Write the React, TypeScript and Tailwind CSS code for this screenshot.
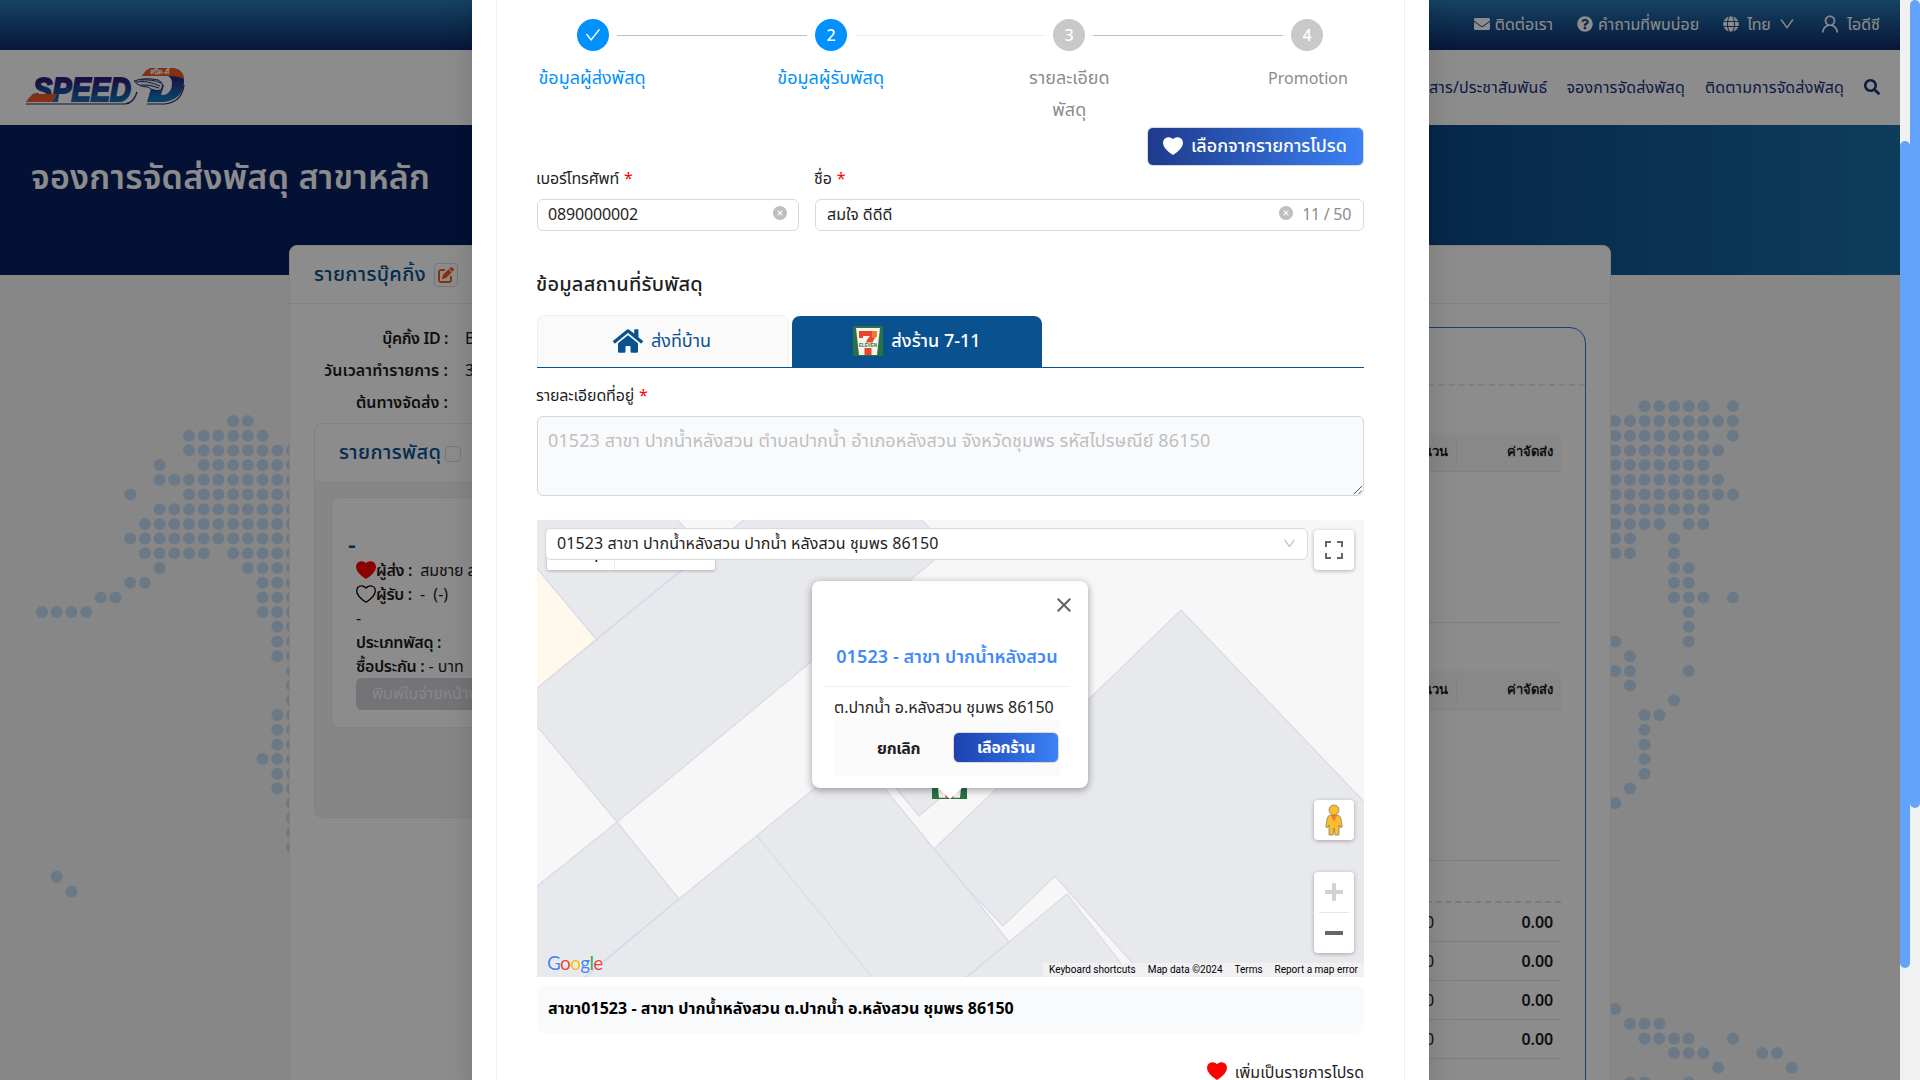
import type { ReactNode } from 'react';
import { FaEnvelope, FaGlobe, FaHome, FaQuestionCircle, FaSearch } from 'react-icons/fa';
import { FaPenToSquare } from 'react-icons/fa6';
import { AiOutlineCheck, AiOutlineDown, AiOutlineUser, AiFillCloseCircle } from 'react-icons/ai';

/* ---------- Dotted world map behind the page ---------- */

const PITCH = 14.703;

// [row, first column, last column]
const DOT_RUNS: [number, number, number][] = [
  [0, 13, 14], [1, 10, 15], [2, 10, 17], [3, 8, 8], [3, 11, 17], [4, 8, 17], [5, 6, 6], [5, 10, 17],
  [6, 8, 17], [7, 7, 17], [8, 6, 17], [9, 7, 11], [9, 13, 17], [10, 8, 8], [10, 14, 17], [11, 6, 7],
  [11, 15, 17], [12, 4, 5], [12, 15, 17], [13, 0, 3], [13, 15, 17], [14, 16, 17], [15, 16, 17],
  [16, 16, 17], [17, 17, 17], [18, 17, 17], [19, 17, 17], [20, 16, 17], [21, 16, 17], [22, 16, 17],
  [23, 15, 17], [24, 16, 17], [25, 16, 17], [26, 17, 17], [27, 17, 17], [28, 17, 17], [29, 17, 17],
  [31, 1, 1], [32, 2, 2],
  [-1, 109, 113], [-1, 115, 115], [0, 107, 115], [1, 107, 113], [1, 115, 115], [2, 107, 114],
  [3, 107, 113], [4, 107, 114], [5, 107, 115], [6, 107, 113], [7, 107, 110], [7, 112, 113],
  [8, 107, 108], [8, 111, 111], [9, 107, 108], [9, 111, 111], [10, 111, 112], [11, 111, 112],
  [12, 111, 113], [12, 115, 115], [13, 112, 112], [14, 112, 112], [15, 107, 107], [15, 112, 112],
  [16, 108, 108], [17, 107, 108], [17, 112, 112], [18, 108, 108], [19, 111, 111], [20, 109, 110],
  [21, 109, 109], [22, 109, 109], [23, 109, 109], [24, 109, 109], [25, 108, 108], [26, 107, 107],
  [40, 107, 107], [41, 108, 110], [42, 109, 112], [42, 115, 115], [43, 111, 113], [43, 117, 118],
  [44, 114, 114], [44, 119, 119], [45, 108, 109], [45, 112, 112],
];

function DotMap() {
  return (
    <svg width="1900" height="1080" className="absolute left-0 top-0 fill-[#c3dcf6]">
      {DOT_RUNS.flatMap(([row, from, to]) =>
        Array.from({ length: to - from + 1 }, (_, k) => (
          <circle key={`${row}-${from + k}`} cx={42 + (from + k) * PITCH} cy={421 + row * 14.7} r="6" />
        )),
      )}
    </svg>
  );
}

/* ---------- Shared drawings ---------- */

function Heart({ className }: { className: string }) {
  return (
    <svg viewBox="0 0 20 18" className={className} strokeWidth="1.3" strokeLinejoin="round">
      <path d="M10 17.2C7.6 15.6.7 10.9.7 5.9.7 3 2.8.8 5.4.8 7.300.8 9 1.900 10 3c1-1.100 2.700-2.200 4.600-2.200 2.600 0 4.700 2.200 4.700 5.100 0 5-6.900 9.700-9.300 11.300z" />
    </svg>
  );
}

function SpeedDLogo() {
  return (
    <svg width="164" height="40" viewBox="0 0 164 40">
      <defs>
        <linearGradient id="speed" x1="0" y1="0" x2="0" y2="1">
          <stop offset="0.25" stopColor="#2b1f7c" />
          <stop offset="0.9" stopColor="#1377b8" />
        </linearGradient>
      </defs>
      <path d="M2 37h99q9-1 12-12M123 37h18q17-2 19-19" fill="none" stroke="#1c2766" strokeWidth="1.200" />
      <text x="9" y="34" fontSize="33" fontWeight="700" fontStyle="italic" fontFamily="Liberation Sans" textLength="98" lengthAdjust="spacingAndGlyphs" fill="url(#speed)" stroke="url(#speed)" strokeWidth="2">SPEED</text>
      <path d="M2 35h25q4-2 6-8H9q-4 3-7 8z" fill="#f15a24" />
      <path d="M118 9l4-5q3-3 8-3h16q15 0 14 15-2 17-20 19h-17l5-17h12l-3 10h3q8-2 8-12 0-6-6-8z" fill="url(#speed)" />
      <path d="M118 9l4-5q3-3 8-3h16q13 0 14 11-5-3-16-3z" fill="#f15a24" />
      <path d="M110 14q11-4 24-1 7 3 3 10-7 2-13-3-9 0-14-6z" fill="#f4f6fb" stroke="#1c2766" strokeWidth="1" />
      <path d="M112 15q11-2 24 4M117 18q9-1 18 3M116 13q12-1 21 3" fill="none" stroke="#1c2766" strokeWidth="1" />
      <text x="126" y="7" fontSize="7" fontWeight="700" fontFamily="Noto Sans" fill="#fff">สปีด-ดี</text>
    </svg>
  );
}

function SevenEleven({ className }: { className: string }) {
  return (
    <svg viewBox="0 0 30 30" className={className}>
      <rect width="30" height="30" fill="#2c7145" />
      <path d="M3 2h24l-3 27H6z" fill="#f6f3ea" />
      <path d="M6 5h18v5q-4 3-5 9h-7q1-5 5-9H10v2H6z" fill="#e8452c" />
      <path d="M11.500 22h7v7h-7z" fill="#e8452c" />
      <path d="M19 5h5v5l-2 2h-3z" fill="#f07d2c" />
      <path d="M5 16.500h20l-.5 5h-19z" fill="#f6f3ea" />
      <text x="15" y="21" fontSize="5" fontWeight="700" textAnchor="middle" fontFamily="Liberation Sans" fill="#2c7145" textLength="18" lengthAdjust="spacingAndGlyphs">ELEVEN</text>
    </svg>
  );
}

/* ---------- Page behind the dialog ---------- */

function TopBar() {
  return (
    <div className="flex h-[50px] items-center justify-end bg-linear-to-b from-[#287cb4] to-[#102a68] pb-[2px] pr-[20px] text-base text-white">
      <FaEnvelope className="mr-[5px] size-4" />
      <span className="mr-6">ติดต่อเรา</span>
      <FaQuestionCircle className="mr-[5px] size-4" />
      <span className="mr-6">คำถามที่พบบ่อย</span>
      <FaGlobe className="mr-2 size-4" />
      <span className="mr-[8px] tracking-[-0.3px]">ไทย</span>
      <AiOutlineDown className="mr-[23px] size-[18px]" />
      <AiOutlineUser className="mr-[6px] size-[22px]" />
      <span>ไอดีซี</span>
    </div>
  );
}

function NavBar() {
  return (
    <div className="flex h-[75px] items-center bg-white pb-px pl-[24px] pr-5 text-base text-[#16327c]">
      <SpeedDLogo />
      <div className="ml-auto flex items-center tracking-[0.16px]">
        <span className="mr-[19px]">ข่าวสาร/ประชาสัมพันธ์</span>
        <span className="mr-[20px]">จองการจัดส่งพัสดุ</span>
        <span className="mr-5">ติดตามการจัดส่งพัสดุ</span>
        <FaSearch className="size-4" />
      </div>
    </div>
  );
}

function InfoRow({ label, value, tracking }: { label: string; value: string; tracking: string }) {
  return (
    <div className="flex h-8 items-center">
      <span className={`w-[158px] whitespace-nowrap text-right font-semibold ${tracking}`}>{label}</span>
      <span className="ml-[17px] whitespace-nowrap">{value}</span>
    </div>
  );
}

function ParcelPanel() {
  return (
    <div className="ml-[24px] mt-[5px] h-[395px] w-[620px] overflow-hidden rounded-lg border border-[#ececec] bg-[#f5f5f5]">
      <div className="flex h-[57px] items-center bg-white pb-[2px] pl-6">
        <span className="text-xl font-medium tracking-[0.4px] text-[#065090]">รายการพัสดุ</span>
        <span className="ml-1 mt-[4px] size-4 rounded border border-[#d9d9d9]" />
      </div>
      <div className="ml-[16px] mt-[16px] h-[231px] rounded-lg border border-[#ececec] bg-white pl-6 leading-6">
        <div className="-ml-[8px] mt-[34px] h-6 text-2xl font-semibold leading-6 text-[#065090]">-</div>
        <div className="mt-[2px] flex h-6 items-center">
          <Heart className="h-[18px] w-5 fill-[#f00] stroke-[#f00]" />
          <span className="font-semibold tracking-[-0.3px]">ผู้ส่ง :</span>
          <span className="ml-2 whitespace-nowrap tracking-[-0.1px]">สมชาย สม</span>
        </div>
        <div className="flex h-6 items-center">
          <Heart className="h-[18px] w-5 fill-none stroke-black" />
          <span className="font-semibold tracking-[-0.3px]">ผู้รับ :</span>
          <span className="ml-2">-&nbsp; (-)</span>
        </div>
        <div className="h-6">-</div>
        <div className="h-6 font-semibold tracking-[-0.3px]">ประเภทพัสดุ :</div>
        <div className="h-6">
          <span className="font-semibold tracking-[-0.3px]">ซื้อประกัน :</span> - บาท
        </div>
        <div className="h-8 w-[220px] rounded-md bg-[#d2d3da] pl-4 leading-[30px] text-[#f5f5f5]">พิมพ์ใบจ่ายหน้าพัสดุ</div>
      </div>
    </div>
  );
}

function FeeHeader() {
  return (
    <div className="flex h-[39px] items-center rounded-tr-lg border-b border-[#ebebeb] bg-[#f8f8f8] pb-px pr-[8px] font-[sans-serif] text-[13px] font-bold">
      <span className="ml-auto mr-2">จำนวน</span>
      <span className="h-[22px] w-px bg-[#ebebeb]" />
      <span className="w-[96px] text-right">ค่าจัดส่ง</span>
    </div>
  );
}

function FeePanel() {
  return (
    <div className="mr-[24px] mt-[23px] h-[800px] w-[500px] rounded-2xl border border-[#2f74dd]">
      <div className="h-[58px] border-b-2 border-dashed border-[#e6e6e6]" />
      <div className="mt-[47px] pr-[24px]">
        <FeeHeader />
        <div className="h-[151px] border-b border-[#e6e6e6]" />
        <div className="mt-12">
          <FeeHeader />
        </div>
        <div className="h-[151px] border-b border-[#e6e6e6]" />
        <div className="h-[42px] border-b-2 border-dashed border-[#dedede]" />
        {[0, 1, 2, 3].map((row) => (
          <div key={row} className="flex h-[39px] items-center justify-end border-b border-[#e6e6e6] pr-[8px] text-base font-semibold tracking-[-0.1px]">
            <span className="font-normal">0</span>
            <span className="w-[119px] text-right">0.00</span>
          </div>
        ))}
      </div>
    </div>
  );
}

function Page() {
  return (
    <div className="relative h-[1080px] w-[1900px] overflow-hidden bg-[#f6f6f6] text-base text-[#1c1c1c]">
      <DotMap />
      <div className="relative">
        <TopBar />
        <NavBar />
        <div className="h-[150px] bg-linear-to-r from-[#07215f] from-50% to-[#1a70a8] pl-[31px] pt-[19px]">
          <h1 className="text-[34px] font-semibold leading-[64px] tracking-[0.26px] text-white">จองการจัดส่งพัสดุ สาขาหลัก</h1>
        </div>
        <div className="ml-[289px] mt-[-30px] h-[860px] w-[1322px] rounded-t-lg border border-[#ececec] bg-white">
          <div className="flex h-[58px] items-center border-b border-[#ececec] pl-6">
            <span className="pb-[2px] text-xl font-medium tracking-[0.35px] text-[#065090]">รายการบุ๊คกิ้ง</span>
            <span className="ml-[8px] flex size-6 items-center justify-center rounded border border-[#d9d9d9]">
              <FaPenToSquare className="size-4 text-[#f25a16]" />
            </span>
          </div>
          <div className="flex justify-between">
            <div>
              <div className="pt-[18px]">
                <InfoRow label="บุ๊คกิ้ง ID :" value="BK" tracking="tracking-[-0.4px]" />
                <InfoRow label="วันเวลาทำรายการ :" value="30" tracking="tracking-[0.1px]" />
                <InfoRow label="ต้นทางจัดส่ง :" value="" tracking="tracking-normal" />
              </div>
              <ParcelPanel />
            </div>
            <FeePanel />
          </div>
        </div>
      </div>
    </div>
  );
}

/* ---------- Dialog: steps ---------- */

function StepCircle({ done, children }: { done?: boolean; children: ReactNode }) {
  return (
    <span className={`flex size-8 shrink-0 items-center justify-center rounded-full pb-px text-base font-medium text-white ${done ? 'bg-[#0091ff]' : 'bg-[#c9c9c9]'}`}>
      {children}
    </span>
  );
}

function Steps() {
  return (
    <div className="pt-[19px]">
      <div className="flex items-center pl-10 pr-[41px]">
        <StepCircle done><AiOutlineCheck className="size-[18px]" /></StepCircle>
        <span className="mx-2 h-px grow bg-[#bfbfbf]" />
        <StepCircle done>2</StepCircle>
        <span className="mx-2 h-px grow bg-[#ededed]" />
        <StepCircle>3</StepCircle>
        <span className="mx-2 h-px grow bg-[#bfbfbf]" />
        <StepCircle>4</StepCircle>
      </div>
      <div className="-ml-px mt-[10px] flex h-[65px] justify-between text-center text-lg leading-8 text-[#8c8c8c]">
        <span className="w-28 text-[#0091ff]">ข้อมูลผู้ส่งพัสดุ</span>
        <span className="w-28 text-[#0091ff]">ข้อมูลผู้รับพัสดุ</span>
        <span className="w-28">รายละเอียด<br />พัสดุ</span>
        <span className="w-28 pt-px text-base leading-8">Promotion</span>
      </div>
    </div>
  );
}

/* ---------- Dialog: form ---------- */

function Label({ children }: { children: ReactNode }) {
  return (
    <div className="-ml-px flex h-8 items-center tracking-[-0.15px]">
      {children}
      <span className="ml-[5px] text-[#f00]">*</span>
    </div>
  );
}

function ReceiverFields() {
  return (
    <div className="-mt-[4px] flex gap-4">
      <div className="w-[262px]">
        <Label>เบอร์โทรศัพท์</Label>
        <div className="mt-[5px] flex h-8 items-center justify-between rounded-md border border-[#d9d9d9] px-[10px] pb-[2px]">
          <span className="tracking-[-0.15px]">0890000002</span>
          <AiFillCloseCircle className="mb-[2px] size-4 text-[#bfbfbf]" />
        </div>
      </div>
      <div className="grow">
        <Label>ชื่อ</Label>
        <div className="mt-[5px] flex h-8 items-center rounded-md border border-[#d9d9d9] pb-[2px] pl-[11px] pr-[12px]">
          <span>สมใจ ดีดีดี</span>
          <AiFillCloseCircle className="mb-[2px] ml-auto mr-2 size-4 text-[#bfbfbf]" />
          <span className="tracking-[-0.3px] text-[#8c8c8c]">11 / 50</span>
        </div>
      </div>
    </div>
  );
}

function DeliveryTabs() {
  return (
    <div className="mt-[15px] flex h-[53px] gap-[3px] border-b border-[#0a528f] text-lg">
      <div className="flex w-[252px] items-center justify-center rounded-t-lg border border-b-0 border-[#f0f0f0] bg-[#fafafa] pb-[2px] pr-[2px] text-[#0a528f]">
        <FaHome className="mr-2 size-[30px]" />
        <span className="pb-[2px]">ส่งที่บ้าน</span>
      </div>
      <div className="mt-px flex w-[250px] items-center justify-center rounded-t-lg bg-[#0a528f] pb-[2px] font-medium text-white">
        <SevenEleven className="mr-2 size-[30px]" />
        <span className="pb-[2px]">ส่งร้าน 7-11</span>
      </div>
    </div>
  );
}

/* ---------- Dialog: map ---------- */

function MapTiles() {
  return (
    <svg width="827" height="457" viewBox="537 520 827 457" className="absolute inset-0">
      <rect x="537" y="520" width="827" height="457" fill="#f7f7f7" />
      <polygon points="530,560 596,639 530,694" fill="#fef9ec" stroke="#e9dfc8" />
      <g fill="#e8e9ed" stroke="#d9dae9" strokeWidth="1.200">
        <polygon points="530,510 668,510 706,550 596,639 530,560" />
        <polygon points="756,510 912,510 949,548 617,822 530,718 530,694" />
        <polygon points="617,822 679,899 530,1022 530,892" />
        <polygon points="858,753 894,800 934,849 965,886 1009,942 960,982 880,990 760,1000 530,1022 679,899" />
        <path d="M757,836L876,982M679,899L580,982" fill="none" />
        <polygon points="860,742 895,787 919,816 962,780 940,740" />
        <polygon points="1181,610 1372,810 1372,985 1152,985 1055,876 1003,926 965,886 934,849" />
        <polygon points="1067,894 1138,985 958,985 1009,942" />
      </g>
    </svg>
  );
}

function InfoWindow() {
  return (
    <div className="absolute left-[275px] top-[61px] w-[276px]">
      <div className="relative h-[207px] rounded-lg bg-white shadow-[0_2px_7px_1px_rgba(0,0,0,0.3)]">
        <svg viewBox="0 0 14 14" className="absolute right-[17px] top-[17px] size-[14px]" stroke="#5f6368" strokeWidth="2">
          <path d="M.7.7l12.600 12.600M13.300.7L.7 13.300" />
        </svg>
        <div className="pl-3 pr-[18px] pt-[47px]">
          <div className="h-[59px] border-b border-[#f0f0f0] text-center text-lg font-semibold leading-[56px] tracking-[0.1px] text-[#4389f8]">
            01523 - สาขา ปากน้ำหลังสวน
          </div>
          <div className="mx-[10px] h-[33px] whitespace-nowrap pt-[6px] text-base leading-[29px] text-[#262626]">ต.ปากน้ำ อ.หลังสวน ชุมพร 86150</div>
          <div className="mx-[10px] flex h-[56px] items-center justify-end bg-[#fafafa] pr-px font-bold text-[#1f1f1f]">
            <span className="mr-[33px] tracking-[-0.4px]">ยกเลิก</span>
            <span className="mb-px flex h-[31px] w-[106px] items-center justify-center rounded-md border border-[#d9d9d9] bg-linear-to-r from-[#1e40af] to-[#3b82f6] pb-px tracking-[-0.3px] text-white">เลือกร้าน</span>
          </div>
        </div>
      </div>
      <svg viewBox="0 0 24 11" className="absolute left-[126px] top-[207px] h-[11px] w-6">
        <path d="M0 0h24L12 11z" fill="#fff" />
      </svg>
    </div>
  );
}

function PegMan() {
  return (
    <svg viewBox="0 0 18 32" className="h-8 w-[18px]" stroke="#7c7568" strokeWidth="0.700">
      <path d="M5 11Q2.500 12 2 15l-1.200 8 2.200.5L4 21v10h4l1-7 1 7h4V21l1 2.500 2.200-.5L16 15q-.5-3-3-4z" fill="#fbbd2c" />
      <path d="M5.500 11h7L9 17.500z" fill="#e9822c" stroke="none" />
      <circle cx="9" cy="6" r="5" fill="#fbbd2c" />
    </svg>
  );
}

function StoreMap() {
  return (
    <div className="relative mt-[24px] h-[457px] overflow-hidden">
      <MapTiles />
      <div className="absolute left-[10px] top-[10px] flex h-10 shadow-[0_1px_3px_rgba(0,0,0,0.25)]">
        <span className="w-[68px] rounded-l-sm border-r border-[#ebebeb] bg-white pl-3 pt-[10px] text-center font-[Roboto] text-lg leading-6">Map</span>
        <span className="w-[100px] rounded-r-sm bg-white pt-[8px] text-center font-[Roboto] text-lg leading-6 text-[#565656]">Satellite</span>
      </div>
      <div className="absolute left-2 top-2 flex h-8 w-[763px] items-center justify-between rounded-md border border-[#d9d9d9] bg-white pl-[11px] pr-[10px] pb-[2px]">
        <span className="tracking-[0.1px]">01523 สาขา ปากน้ำหลังสวน ปากน้ำ หลังสวน ชุมพร 86150</span>
        <AiOutlineDown className="size-[15px] text-[#bfbfbf]" />
      </div>
      <div className="absolute right-[10px] top-[10px] flex size-10 items-center justify-center rounded-sm bg-white shadow-[0_1px_4px_rgba(0,0,0,0.3)]">
        <svg viewBox="0 0 18 18" className="size-[18px]" fill="#666">
          <path d="M0 0h6v2H2v4H0zM12 0h6v6h-2V2h-4zM0 12h2v4h4v2H0zM16 12h2v6h-6v-2h4z" />
        </svg>
      </div>
      <SevenEleven className="absolute left-[395px] top-[244px] size-[35px]" />
      <InfoWindow />
      <div className="absolute right-[10px] top-[280px] flex size-10 items-center justify-center rounded-sm bg-white shadow-[0_1px_4px_rgba(0,0,0,0.3)]">
        <PegMan />
      </div>
      <div className="absolute right-[10px] top-[352px] h-[81px] w-10 rounded-sm bg-white px-[5px] shadow-[0_1px_4px_rgba(0,0,0,0.3)]">
        <div className="flex h-[41px] items-center justify-center border-b border-[#e6e6e6]">
          <svg viewBox="0 0 18 18" className="size-[18px]" fill="#d2d2d2"><path d="M7 0h4v7h7v4h-7v7H7v-7H0V7h7z" /></svg>
        </div>
        <div className="flex h-10 items-center justify-center">
          <span className="h-1 w-[18px] bg-[#666]" />
        </div>
      </div>
      <div className="absolute bottom-[2px] left-[10px] font-[Lato] text-[19px] leading-6 tracking-[-0.7px] [text-shadow:0_0_2px_#fff]">
        <span className="text-[#4285f4]">G</span><span className="text-[#ea4335]">o</span><span className="text-[#fbbc05]">o</span><span className="text-[#4285f4]">g</span><span className="text-[#34a853]">l</span><span className="text-[#ea4335]">e</span>
      </div>
      <div className="absolute bottom-0 right-0 flex h-[14px] w-[321px] justify-between bg-[#f1f1f3] pl-[6px] pr-[6px] font-[Roboto] text-[10px] leading-[14px] text-black">
        <span>Keyboard shortcuts</span>
        <span>Map data ©2024</span>
        <span>Terms</span>
        <span>Report a map error</span>
      </div>
    </div>
  );
}

function Dialog() {
  return (
    <div className="absolute left-[472px] top-0 h-[1080px] w-[957px] overflow-hidden bg-white px-6 text-base text-[#1f1f1f] shadow-[0_6px_16px_0_rgba(0,0,0,0.08),0_3px_6px_-4px_rgba(0,0,0,0.12),0_9px_28px_8px_rgba(0,0,0,0.05)]">
      <div className="h-[1100px] border-x border-[#f0f0f0] px-10">
        <Steps />
        <div className="mt-[1px] flex justify-end">
          <div className="flex h-[39px] w-[217px] items-center rounded-md border border-[#d9d9d9] bg-linear-to-r from-[#1e3a8a] to-[#3b82f6] pb-[3px] pl-[15px] text-lg font-medium text-white">
            <Heart className="mr-[8px] mt-px h-[18px] w-5 fill-white stroke-white" />
            <span className="whitespace-nowrap tracking-[-0.05px]">เลือกจากรายการโปรด</span>
          </div>
        </div>
        <ReceiverFields />
        <div className="-ml-px mt-[37px] h-8 text-xl font-medium leading-8 tracking-[0.2px]">ข้อมูลสถานที่รับพัสดุ</div>
        <DeliveryTabs />
        <div className="mt-[11px]">
          <Label>รายละเอียดที่อยู่</Label>
        </div>
        <div className="relative mt-[5px] h-20 rounded-md border border-[#d5d7da] bg-[#f9fafc] px-[10px] pt-[7px] text-lg leading-8 tracking-[0.1px] text-[#bfbfbf]">
          01523 สาขา ปากน้ำหลังสวน ตำบลปากน้ำ อำเภอหลังสวน จังหวัดชุมพร รหัสไปรษณีย์ 86150
          <svg viewBox="0 0 8 8" className="absolute bottom-px right-px size-2" stroke="#555" strokeWidth="1">
            <path d="M0 8L8 0M4.500 8L8 4.500" />
          </svg>
        </div>
        <StoreMap />
        <div className="mt-2 h-12 rounded-lg bg-[#f9fafc] pl-[11px] font-bold leading-[46px] tracking-[0.05px] text-black">
          สาขา01523 - สาขา ปากน้ำหลังสวน ต.ปากน้ำ อ.หลังสวน ชุมพร 86150
        </div>
        <div className="mt-[23px] flex h-8 items-center justify-end">
          <Heart className="mb-[2px] mr-2 h-[18px] w-5 fill-[#f00] stroke-[#f00]" />
          <span>เพิ่มเป็นรายการโปรด</span>
        </div>
      </div>
    </div>
  );
}

export default function App() {
  return (
    <div className="relative flex h-[1080px] w-[1920px] overflow-hidden font-['Noto_Sans','Noto_Sans_Thai',sans-serif]">
      <Page />
      <div className="w-[10px] bg-[#f1f1f1] pt-[141px]">
        <div className="h-[827px] rounded-full bg-[#62a4fb]" />
      </div>
      <div className="w-[10px] bg-[#f1f1f1]">
        <div className="h-[808px] rounded-full bg-[#62a4fb]" />
      </div>
      <div className="absolute left-0 top-0 h-[1080px] w-[1900px] bg-black/45" />
      <Dialog />
    </div>
  );
}
